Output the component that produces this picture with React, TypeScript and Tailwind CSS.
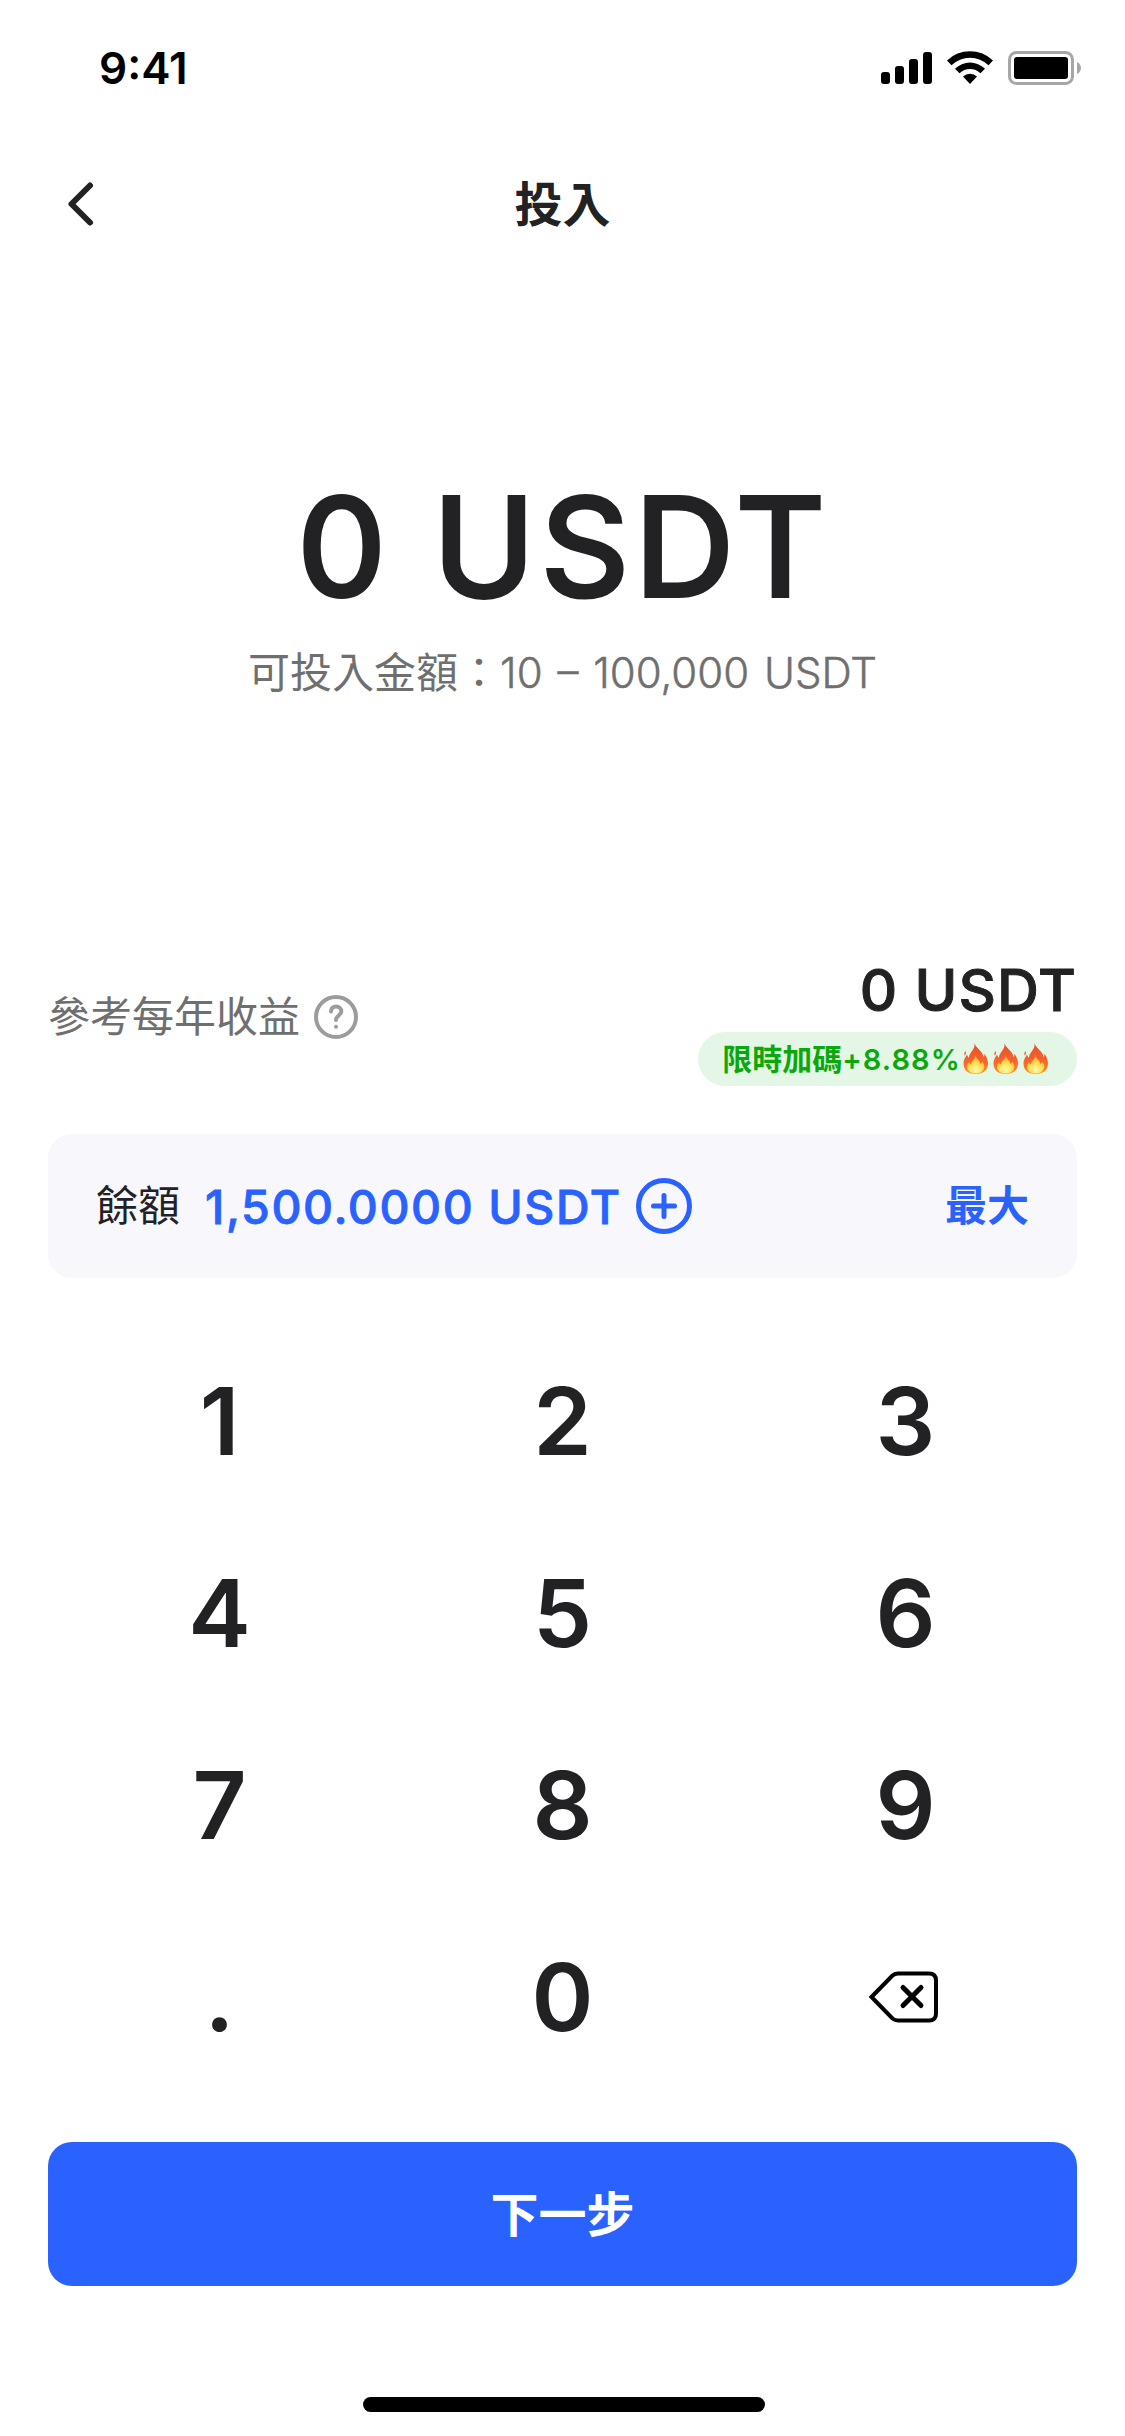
import { ReactNode } from 'react'

const keys = ['1', '2', '3', '4', '5', '6', '7', '8', '9', '.', '0']

function Flame() {
    return (
        <svg width="25" height="31" viewBox="0 0 25 31">
            <defs>
                <linearGradient id="flame" x1="0" y1="0" x2="0" y2="1">
                    <stop offset="0" stopColor="#e8502c" />
                    <stop offset="0.5" stopColor="#f4602c" />
                    <stop offset="1" stopColor="#f98a2a" />
                </linearGradient>
                <radialGradient id="core" cx="0.5" cy="0.8" r="0.75">
                    <stop offset="0" stopColor="#fff9b0" />
                    <stop offset="0.5" stopColor="#ffdf50" />
                    <stop offset="1" stopColor="#fba12e" />
                </radialGradient>
            </defs>
            <path fill="url(#flame)" d="M11.5 0C12.5 5 20 8 20.5 14C21.5 13.5 21.5 12 21.2 10.5C23.5 13 25 17 25 20.5C25 27 19.5 31 12.5 31C5.5 31 0.5 27 0.5 20.5C0.5 16.5 2.5 14 4 11.5C4.5 13 5 14 6 14.8C6 9 12.5 7 11.5 0ZM2.5 8C3.5 9.5 3 11 1.8 12.5C0.8 11 1.5 9.5 2.5 8Z" />
            <path fill="url(#core)" d="M12.5 12C13 16 17 17 17.5 21C18.5 20.5 19 19.5 19 18.5C20.5 20.5 21.5 22 21.3 24C21 28.5 17 30.5 12.5 30.5C7.5 30.5 4 28 4 24C4 22 5 20.5 6 19C6.5 20.5 7 21 8 21.5C8 18 12.5 16 12.5 12Z" />
        </svg>
    )
}

function StatusBar() {
    return (
        <div className="flex h-[132px] items-center justify-between pr-[42px] pl-[99px] pt-[4px]">
            <p className="text-[44px] leading-none font-semibold text-black">9:41</p>
            <svg width="202" height="36" viewBox="0 0 202 36">
                <rect x="0" y="22" width="9" height="12" rx="3" />
                <rect x="14" y="16" width="9" height="18" rx="3" />
                <rect x="28" y="9" width="9" height="25" rx="3" />
                <rect x="42" y="2" width="9" height="32" rx="3" />
                <path d="M66 10.5A33 33 0 0 1 112 10.5L107.5 15.2A26.5 26.5 0 0 0 70.5 15.2Z" />
                <path d="M74 18.7A21.5 21.5 0 0 1 104 18.7L99.5 23.2A15 15 0 0 0 78.5 23.2Z" />
                <path d="M82 26.5A10.5 10.5 0 0 1 96 26.5L89 34Z" />
                <rect x="128.5" y="2.5" width="63" height="31" rx="7" fill="none" stroke="#a6a6a6" strokeWidth="3" />
                <rect x="133" y="7" width="54" height="22" rx="3" />
                <path fill="#a6a6a6" d="M196 12C201.3 14 201.3 22 196 24Z" />
            </svg>
        </div>
    )
}

function Key({ children }: { children: ReactNode }) {
    return (
        <button className="flex h-48 items-center justify-center pb-[3px] text-[94px] leading-none font-semibold">
            {children}
        </button>
    )
}

export default function App() {
    return (
        <div className="flex h-[2436px] w-[1125px] flex-col bg-white font-[Inter,'Noto_Sans_CJK_TC',sans-serif] text-[#222224]">
            <StatusBar />

            <div className="grid h-36 grid-cols-3 items-center px-[60px]">
                <svg width="42" height="48" viewBox="0 0 42 48" fill="none" stroke="currentColor" strokeWidth="6" strokeLinecap="round" strokeLinejoin="round">
                    <path d="M30 5.5L11.5 24L30 42.5" />
                </svg>
                <h1 className="pt-[2px] text-center text-[48px] leading-none font-bold">投入</h1>
            </div>

            <div className="flex h-[680px] flex-col items-center pt-[187px]">
                <p className="pl-[2px] text-[139px] leading-[168px] font-medium tracking-[4.5px] [-webkit-text-stroke:2px_#222224]">0 USDT</p>
                <p className="mt-[12px] text-[42px] leading-[60px] text-[#6f6f6f]">
                    可投入金額：<span className="font-light [word-spacing:3px] [-webkit-text-stroke:0.5px_#6f6f6f]">10 – 100,000 USDT</span>
                </p>
            </div>

            <div className="flex h-[178px] items-start justify-between px-12">
                <div className="flex items-center gap-3 pt-[31px]">
                    <p className="text-[42px] leading-[60px] text-[#6f6f6f]">參考每年收益</p>
                    <svg width="48" height="48" viewBox="0 0 48 48" fill="none" stroke="#9c9c9f" strokeWidth="4" strokeLinecap="round">
                        <circle cx="24" cy="24" r="20" />
                        <path d="M19 18.5C19 11.5 29.3 12 29.3 18.5C29.3 22.5 24 22.5 24 27" />
                        <path d="M24 33.7V33.8" />
                    </svg>
                </div>
                <div className="flex flex-col items-end">
                    <p className="-mt-[2px] text-[58px] leading-[72px] font-medium tracking-[1px] [-webkit-text-stroke:1px_#222224]">0 USDT</p>
                    <div className="mt-[6px] flex h-[54px] items-center rounded-full bg-[#e4f7e6] pr-[29px] pl-6 text-[30px] leading-none font-bold text-[#0ba80b]">
                        限時加碼<span className="pt-[1px] text-[29px] font-semibold tracking-[1.1px]">+8.88%</span>
                        <span className="ml-[2px] flex gap-[5px] pb-[2px]">
                            <Flame />
                            <Flame />
                            <Flame />
                        </span>
                    </div>
                </div>
            </div>

            <div className="mx-12 flex h-36 items-center rounded-3xl bg-[#f7f7fc] px-12">
                <p className="text-[42px] leading-none">餘額</p>
                <p className="ml-[25px] pt-[2px] text-[46.5px] leading-none font-medium tracking-[1.6px] text-[#2962ff] [-webkit-text-stroke:0.8px_#2962ff]">1,500.0000 USDT</p>
                <svg className="ml-[12px]" width="60" height="60" viewBox="0 0 60 60" fill="none" stroke="#2962ff" strokeWidth="5" strokeLinecap="round">
                    <circle cx="30" cy="30" r="25.5" />
                    <path d="M30 19.5V40.5M19.5 30H40.5" />
                </svg>
                <button className="ml-auto text-[42px] leading-none font-bold text-[#2962ff]">最大</button>
            </div>

            <div className="mx-12 mt-12 grid grid-cols-3">
                {keys.map((k) => (
                    <Key key={k}>{k}</Key>
                ))}
                <Key>
                    <svg className="mr-[3px]" width="72" height="56" viewBox="0 0 72 56" fill="none" stroke="black" strokeWidth="4">
                        <path d="M3.5 28L24.5 6.5Q27 4.5 30 4.5H61Q68 4.5 68 11.5V44.5Q68 51.5 61 51.5H30Q27 51.5 24.5 49.5Z" />
                        <path strokeLinecap="round" strokeWidth="5" d="M35 18.5L53 36.5M53 18.5L35 36.5" />
                    </svg>
                </Key>
            </div>

            <button className="mx-12 mt-12 h-36 rounded-3xl bg-[#2962ff] pt-[1px] text-[48px] leading-none font-bold text-white">
                下一步
            </button>

            <div className="mt-auto mb-6 ml-[363px] h-[15px] w-[402px] rounded-full bg-black" />
        </div>
    )
}
